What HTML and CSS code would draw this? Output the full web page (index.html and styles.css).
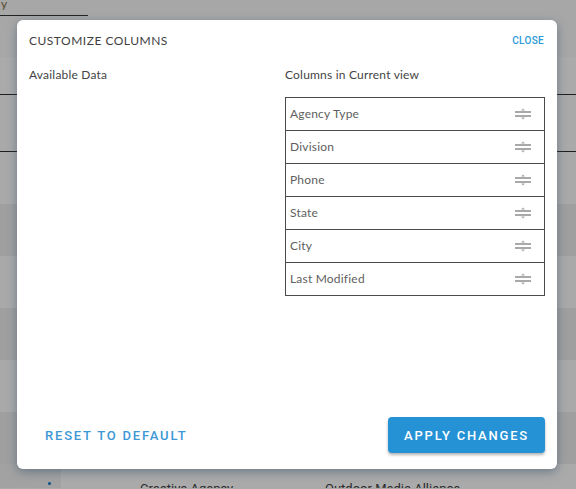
FILE: index.html
```html
<!DOCTYPE html>
<html lang="en">
<head>
    <meta charset="UTF-8">
    <meta name="viewport" content="width=device-width, initial-scale=1.0">
    <title>Customize Columns</title>
    <link rel="stylesheet" href="styles.css">
</head>
<body>
    <div class="pagina">
        <div class="cabecera">
            <div class="buscador">y</div>
        </div>
        <div class="fila-tabla titulos"></div>
        <div class="fila-tabla linea"></div>
        <div class="fila-tabla clara"></div>
        <div class="fila-tabla oscura"></div>
        <div class="fila-tabla clara"></div>
        <div class="fila-tabla oscura"></div>
        <div class="fila-tabla clara"></div>
        <div class="fila-tabla oscura"></div>
        <div class="fila-tabla clara ultima">
            <span class="punto"></span>
            <span class="celda-uno">Creative Agency</span>
            <span class="celda-dos">Outdoor Media Alliance</span>
        </div>
    </div>

    <div class="modal">
        <div class="modal-cabecera">
            <h2 class="modal-titulo">Customize Columns</h2>
            <button class="cerrar">Close</button>
        </div>
        <div class="columnas">
            <div class="columna">
                <p class="etiqueta">Available Data</p>
            </div>
            <div class="columna">
                <p class="etiqueta">Columns in Current view</p>
                <ul class="lista">
                    <li class="item">Agency Type<span class="mover"></span></li>
                    <li class="item">Division<span class="mover"></span></li>
                    <li class="item">Phone<span class="mover"></span></li>
                    <li class="item">State<span class="mover"></span></li>
                    <li class="item">City<span class="mover"></span></li>
                    <li class="item">Last Modified<span class="mover"></span></li>
                </ul>
            </div>
        </div>
        <div class="modal-pie">
            <button class="reset">Reset to default</button>
            <button class="aplicar">Apply changes</button>
        </div>
    </div>

    <script>
        // el icono de arrastre es el mismo en todas las filas
        const icono = '<svg width="16" height="14" viewBox="0 0 16 14"><path d="M6 3.5 L8 1.5 L10 3.5 Z" fill="#a9a9a9"/><rect x="0" y="4" width="16" height="2" fill="#a9a9a9"/><rect x="0" y="8" width="16" height="2" fill="#a9a9a9"/><path d="M6 10.5 L8 12.5 L10 10.5 Z" fill="#a9a9a9"/></svg>';
        document.querySelectorAll('.mover').forEach(function(span){
            span.innerHTML = icono;
        });
    </script>
</body>
</html>
```

FILE: styles.css
```css
*{
    margin: 0;
    padding: 0;
    box-sizing: border-box;
}
html{
    overflow: hidden;
}
body{
    width: 576px;
    height: 489px;
    overflow: hidden;
    background: #a9a9a9;
    font-family: Lato, "Noto Sans", sans-serif;
}
.pagina{
    display: flex;
    flex-direction: column;
}
.cabecera{
    height: 57px;
    background: #a7a7a7;
}
.buscador{
    width: 88px;
    height: 16px;
    border-bottom: 1px solid #222;
    color: #5a4a2a;
    font-size: 12px;
    line-height: 8px;
    padding-left: 1px;
    overflow: hidden;
}
.fila-tabla{
    height: 52px;
    flex-shrink: 0;
}
.titulos{
    height: 38px;
    background: #aaaaaa;
    border-bottom: 1px solid #1e1e1e;
}
.linea{
    height: 57px;
    background: #a9a9a9;
    border-bottom: 1px solid #1e1e1e;
}
.clara{
    background: #a9a9a9;
}
.oscura{
    background: #9f9f9f;
}
.ultima{
    position: relative;
    height: 24px;
    overflow: hidden;
    background: linear-gradient(90deg, #a2a2a2 0 61px, #aaaaaa 61px);
    font-family: Roboto, sans-serif;
    font-size: 13px;
    color: #2b2b2b;
}
.punto{
    position: absolute;
    left: 48px;
    top: 18px;
    width: 3px;
    height: 3px;
    border-radius: 50%;
    background: #0c4f86;
}
.celda-uno{
    position: absolute;
    left: 140px;
    top: 17px;
}
.celda-dos{
    position: absolute;
    left: 325px;
    top: 17px;
}

.modal{
    position: absolute;
    left: 17px;
    top: 20px;
    width: 540px;
    height: 449px;
    background: white;
    border-radius: 6px;
    box-shadow: 0 3px 10px rgba(60, 85, 110, 0.55);
    display: flex;
    flex-direction: column;
    padding: 0 12px;
}
.modal-cabecera{
    display: flex;
    justify-content: space-between;
    align-items: center;
    height: 40px;
}
.modal-titulo{
    font-size: 12px;
    font-weight: 400;
    color: #3f3f3f;
    text-transform: uppercase;
    letter-spacing: 0.5px;
}
.cerrar{
    background: none;
    border: none;
    font-family: Roboto, sans-serif;
    font-size: 10px;
    font-weight: 500;
    color: #2a9ad8;
    text-transform: uppercase;
    letter-spacing: 0.3px;
    margin-right: 1px;
    cursor: pointer;
}
.columnas{
    display: grid;
    grid-template-columns: 256px 260px;
    padding-top: 7px;
}
.etiqueta{
    font-size: 12px;
    color: #444;
    line-height: 16px;
    letter-spacing: 0.2px;
    margin-bottom: 14px;
}
.lista{
    list-style: none;
    border: 1px solid #4a4a4a;
    border-bottom: none;
}
.item{
    height: 33px;
    border-bottom: 1px solid #4a4a4a;
    display: flex;
    align-items: center;
    justify-content: space-between;
    padding: 0 13px 1px 4px;
    font-size: 12px;
    color: #606060;
    letter-spacing: 0.2px;
}
.mover{
    display: flex;
}
.modal-pie{
    margin-top: auto;
    margin-bottom: 16px;
    display: flex;
    justify-content: space-between;
    align-items: center;
}
button{
    cursor: pointer;
}
.reset, .aplicar{
    height: 36px;
    padding: 0 16px;
    border: none;
    border-radius: 4px;
    font-family: Roboto, sans-serif;
    font-size: 13px;
    font-weight: 500;
    text-transform: uppercase;
    letter-spacing: 1.8px;
}
.reset{
    background: none;
    color: #3c98d6;
}
.aplicar{
    background: #2592d6;
    color: white;
    box-shadow: 0 2px 3px rgba(0, 0, 0, 0.3);
}
```
